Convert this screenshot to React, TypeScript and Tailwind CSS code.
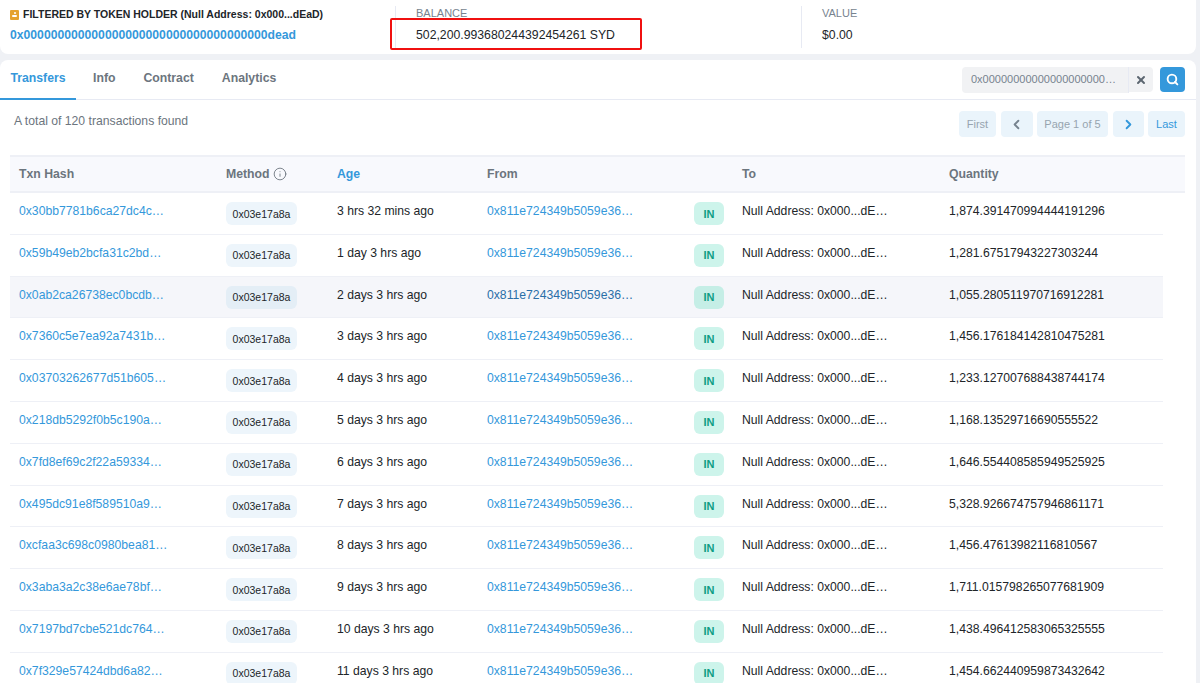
import React from "react";
import { Search, X, ChevronLeft, ChevronRight, Info } from "lucide-react";

const rows: [string, string, string][] = [
  ["0x30bb7781b6ca27dc4c", "3 hrs 32 mins ago", "1,874.391470994444191296"],
  ["0x59b49eb2bcfa31c2bd", "1 day 3 hrs ago", "1,281.67517943227303244"],
  ["0x0ab2ca26738ec0bcdb", "2 days 3 hrs ago", "1,055.280511970716912281"],
  ["0x7360c5e7ea92a7431b", "3 days 3 hrs ago", "1,456.176184142810475281"],
  ["0x03703262677d51b605", "4 days 3 hrs ago", "1,233.127007688438744174"],
  ["0x218db5292f0b5c190a", "5 days 3 hrs ago", "1,168.13529716690555522"],
  ["0x7fd8ef69c2f22a59334", "6 days 3 hrs ago", "1,646.554408585949525925"],
  ["0x495dc91e8f589510a9", "7 days 3 hrs ago", "5,328.926674757946861171"],
  ["0xcfaa3c698c0980bea81", "8 days 3 hrs ago", "1,456.47613982116810567"],
  ["0x3aba3a2c38e6ae78bf", "9 days 3 hrs ago", "1,711.015798265077681909"],
  ["0x7197bd7cbe521dc764", "10 days 3 hrs ago", "1,438.496412583065325555"],
  ["0x7f329e57424dbd6a82", "11 days 3 hrs ago", "1,454.662440959873432642"],
];

const grid = "grid grid-cols-[207px_111px_150px_207px_48px_207px_1fr]";

export default function App() {
  return (
    <div className="h-[683px] w-[1200px] overflow-hidden bg-[#eff1f5] font-['Liberation_Sans',Arial,sans-serif] text-[12.2px] text-[#212529]">
      <div className="flex h-[54px] w-[1196px] rounded-b-lg bg-white">
        <div className="w-[395px] pl-2 pt-2">
          <div className="flex h-[13px] items-center gap-[4px] text-[10.5px] font-bold leading-[13px]">
            <span className="ml-[2px] flex h-[10px] w-[9px] flex-col items-center justify-center gap-[1px] rounded-[1px] bg-[#e5a22e]">
              <span className="h-[2px] w-[2px] rounded-full bg-white" />
              <span className="h-[2px] w-[5px] rounded-[1px] bg-white" />
            </span>
            <span>FILTERED BY TOKEN HOLDER (Null Address: 0x000...dEaD)</span>
          </div>
          <div className="ml-[2px] mt-[6px] text-[12.2px] font-bold leading-[16px] text-[#3498db]">
            0x000000000000000000000000000000000000dead
          </div>
        </div>
        <div className="relative my-[6px] w-[406px] border-l border-[#e7eaf3] pl-5">
          <div className="text-[11px] leading-[14px] text-[#77838f]">BALANCE</div>
          <div className="mt-[7px] text-[12.25px] leading-[16px]">502,200.993680244392454261 SYD</div>
          <div className="absolute left-[-6px] top-[12px] h-[32px] w-[252px] rounded-[2px] border-2 border-[#f01010]" />
        </div>
        <div className="my-[6px] border-l border-[#e7eaf3] pl-5">
          <div className="text-[11px] leading-[14px] text-[#77838f]">VALUE</div>
          <div className="mt-[7px] text-[12.25px] leading-[16px]">$0.00</div>
        </div>
      </div>

      <div className="mt-[6px] h-[623px] w-[1196px] overflow-hidden rounded-t-lg bg-white">
        <div className="flex h-[40px] items-center justify-between border-b border-[#e7eaf3] pr-[11px]">
          <div className="flex h-[40px] text-[12.25px] font-bold text-[#6c757e]">
            <div className="flex w-[76px] items-center justify-center border-b-2 border-[#3498db] text-[#3498db]">Transfers</div>
            <div className="ml-[17px] flex items-center pb-[2px]">Info</div>
            <div className="ml-[28px] flex items-center pb-[2px]">Contract</div>
            <div className="ml-[28px] flex items-center pb-[2px]">Analytics</div>
          </div>
          <div className="flex items-center">
            <div className="flex h-[26px] w-[167px] items-center rounded-l border-r border-[#e7eaf3] bg-[#f1f2f4] pl-[9px] text-[11px] text-[#77838f]">
              <span>0x00000000000000000000…</span>
            </div>
            <div className="flex h-[25px] w-[24px] items-center justify-center rounded-r bg-[#f1f2f4]">
              <X size={12} strokeWidth={4} className="text-[#5c6670]" />
            </div>
            <div className="ml-[7px] flex h-[25px] w-[25px] items-center justify-center rounded bg-[#3498db]">
              <Search size={13} strokeWidth={3.5} className="text-white" />
            </div>
          </div>
        </div>

        <div className="flex h-[55px] items-start justify-between pr-[11px] pl-[14px]">
          <div className="mt-[13px] text-[12.2px] leading-[16px] text-[#6c757e]">A total of 120 transactions found</div>
          <div className="mt-[11px] flex h-[26px] gap-[4.5px] text-[11px] text-[#97a4af]">
            <div className="flex w-[37px] items-center justify-center rounded bg-[#eaf4fb]">First</div>
            <div className="flex w-[32px] items-center justify-center rounded bg-[#eaf4fb]">
              <ChevronLeft size={15} strokeWidth={3} className="text-[#77838f]" />
            </div>
            <div className="flex w-[71px] items-center justify-center rounded bg-[#eaf4fb]">Page 1 of 5</div>
            <div className="flex w-[31px] items-center justify-center rounded bg-[#eaf4fb]">
              <ChevronRight size={15} strokeWidth={3} className="text-[#3498db]" />
            </div>
            <div className="flex w-[37px] items-center justify-center rounded bg-[#eaf4fb] text-[#3498db]">Last</div>
          </div>
        </div>

        <div className="ml-[10px] w-[1175px]">
          <div className={`${grid} h-[38px] items-center border-y-2 border-[#eef0f6] bg-[#f8f9fd] pl-[9px] text-[12.25px] font-bold text-[#6c757e]`}>
            <div>Txn Hash</div>
            <div className="flex items-center gap-[3px]">
              Method <Info size={14} strokeWidth={1.5} />
            </div>
            <div className="text-[#3498db]">Age</div>
            <div>From</div>
            <div />
            <div>To</div>
            <div>Quantity</div>
          </div>

          {rows.map(([hash, age, qty], i) => {
            const hi = i === 2;
            return (
              <div
                key={hash}
                className={`${grid} h-[41.8px] w-[1153px] items-start border-b border-[#eef0f6] pl-[9px] pt-[10px] leading-[16px] ${hi ? "bg-[#f5f6fa]" : ""}`}
              >
                <div className="text-[#3498db]">{hash}…</div>
                <div>
                  <div className={`mt-[-1px] flex h-[23px] w-[71px] items-center justify-center rounded-md text-[10.5px] ${hi ? "bg-[#e4eef6]" : "bg-[#edf5fb]"}`}>
                    0x03e17a8a
                  </div>
                </div>
                <div>{age}</div>
                <div className={hi ? "text-[#2a6fa8]" : "text-[#3498db]"}>0x811e724349b5059e36…</div>
                <div>
                  <div className={`mt-[-1px] flex h-[23px] w-[30px] items-center justify-center rounded-md text-[11px] font-bold text-[#0f9d84] ${hi ? "bg-[#c5eee6]" : "bg-[#cdf4eb]"}`}>
                    IN
                  </div>
                </div>
                <div>Null Address: 0x000...dE…</div>
                <div>{qty}</div>
              </div>
            );
          })}
        </div>
      </div>
    </div>
  );
}
